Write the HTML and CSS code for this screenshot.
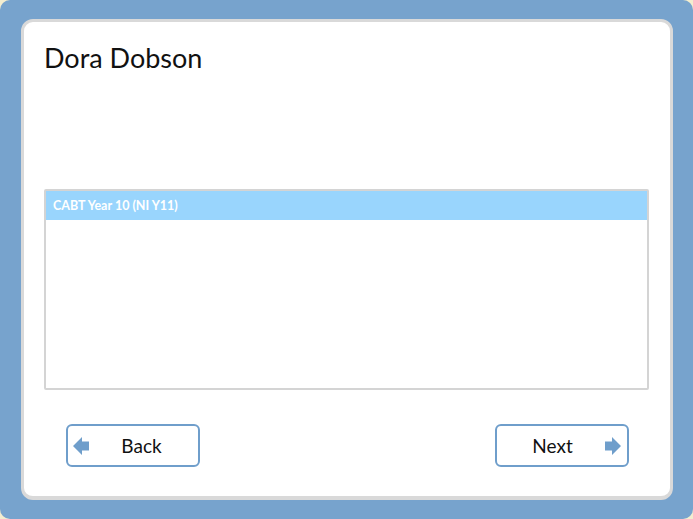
FILE: index.html
```html
<!DOCTYPE html>
<html>
<head>
<meta charset="utf-8">
<link rel="stylesheet" href="styles.css">
</head>
<body>
<div class="frame">
  <div class="card">
    <h1 class="title">Dora Dobson</h1>
    <div class="list">
      <div class="list-row selected">CABT Year 10 (NI Y11)</div>
    </div>
    <div class="actions">
      <button class="btn btn-back">
        <svg class="arrow" width="16" height="20" viewBox="0 0 16 20"><path d="M0 10 L9 1 L9 5.5 L16 5.5 L16 14.5 L9 14.5 L9 19 Z" fill="#6f9ecb"/></svg>
        <span class="label">Back</span>
      </button>
      <button class="btn btn-next">
        <span class="label">Next</span>
        <svg class="arrow" width="16" height="20" viewBox="0 0 16 20"><path d="M16 10 L7 1 L7 5.5 L0 5.5 L0 14.5 L7 14.5 L7 19 Z" fill="#6f9ecb"/></svg>
      </button>
    </div>
  </div>
</div>
</body>
</html>
```
FILE: styles.css
```css
html, body {
  margin: 0;
  padding: 0;
  background: #f3edcf;
}
.frame {
  width: 693px;
  height: 519px;
  box-sizing: border-box;
  background: #77a3cd;
  border-radius: 10px;
  padding: 19px 20px 19px 21px;
  font-family: Lato, "Open Sans", sans-serif;
}
.card {
  height: 100%;
  box-sizing: border-box;
  background: #fff;
  border: 3px solid #d9d9d9;
  border-bottom-width: 4px;
  border-radius: 12px;
  padding: 0 21px 0 20px;
  display: flex;
  flex-direction: column;
}
.title {
  margin: 20px 0 0 0;
  font-size: 27px;
  font-weight: 400;
  color: #111;
  line-height: 32px;
  height: 147px;
}
.list {
  height: 201px;
  box-sizing: border-box;
  border: 2px solid #d4d4d4;
  border-radius: 2px;
  background: #fff;
}
.list-row {
  height: 29px;
  line-height: 29px;
  padding-left: 7px;
  font-family: Lato, "Open Sans", sans-serif;
  font-size: 12.5px;
  color: #fff;
  font-weight: 700;
}
.list-row.selected {
  background: #99d5fd;
}
.actions {
  display: flex;
  justify-content: space-between;
  padding: 0 20px 0 22px;
  margin-top: 34px;
}
.btn {
  width: 134px;
  height: 43px;
  box-sizing: border-box;
  border: 2px solid #6f9ecb;
  border-radius: 6px;
  background: #fff;
  display: flex;
  align-items: center;
  padding: 0 6px 0 5px;
  font-family: Lato, "Open Sans", sans-serif;
  font-size: 19px;
  color: #111;
  cursor: pointer;
}
.btn .label {
  flex: 1;
  text-align: center;
}
.btn-back .label {
  padding-left: 2px;
}
.btn-next .label {
  padding-right: 2px;
}
.arrow {
  flex: none;
  display: block;
}
```
